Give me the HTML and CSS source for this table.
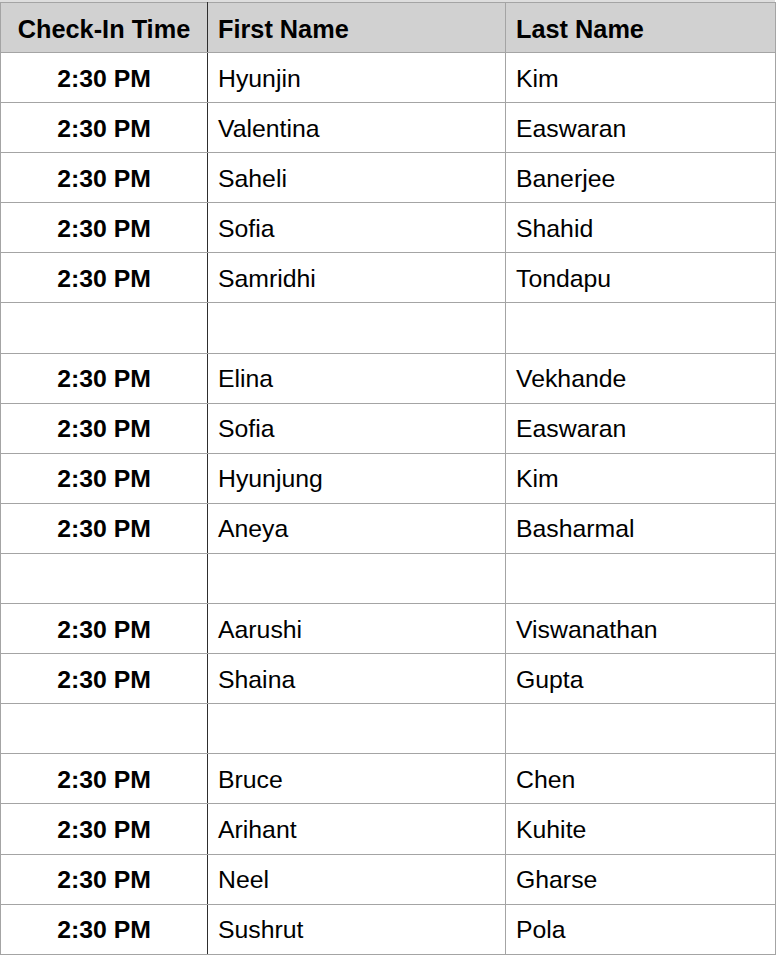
FILE: index.html
```html
<!DOCTYPE html>
<html>
<head>
<meta charset="utf-8">
<link rel="stylesheet" href="styles.css">
</head>
<body>
<div class="sheet">
<table class="roster">
  <colgroup>
    <col class="c-time"><col class="c-first"><col class="c-last">
  </colgroup>
  <thead>
    <tr><th class="time">Check-In Time</th><th>First Name</th><th>Last Name</th></tr>
  </thead>
  <tbody>
    <tr><td class="time">2:30 PM</td><td>Hyunjin</td><td>Kim</td></tr>
    <tr><td class="time">2:30 PM</td><td>Valentina</td><td>Easwaran</td></tr>
    <tr><td class="time">2:30 PM</td><td>Saheli</td><td>Banerjee</td></tr>
    <tr><td class="time">2:30 PM</td><td>Sofia</td><td>Shahid</td></tr>
    <tr><td class="time">2:30 PM</td><td>Samridhi</td><td>Tondapu</td></tr>
    <tr><td class="time"></td><td></td><td></td></tr>
    <tr><td class="time">2:30 PM</td><td>Elina</td><td>Vekhande</td></tr>
    <tr><td class="time">2:30 PM</td><td>Sofia</td><td>Easwaran</td></tr>
    <tr><td class="time">2:30 PM</td><td>Hyunjung</td><td>Kim</td></tr>
    <tr><td class="time">2:30 PM</td><td>Aneya</td><td>Basharmal</td></tr>
    <tr><td class="time"></td><td></td><td></td></tr>
    <tr><td class="time">2:30 PM</td><td>Aarushi</td><td>Viswanathan</td></tr>
    <tr><td class="time">2:30 PM</td><td>Shaina</td><td>Gupta</td></tr>
    <tr><td class="time"></td><td></td><td></td></tr>
    <tr><td class="time">2:30 PM</td><td>Bruce</td><td>Chen</td></tr>
    <tr><td class="time">2:30 PM</td><td>Arihant</td><td>Kuhite</td></tr>
    <tr><td class="time">2:30 PM</td><td>Neel</td><td>Gharse</td></tr>
    <tr><td class="time">2:30 PM</td><td>Sushrut</td><td>Pola</td></tr>
  </tbody>
</table>
</div>
</body>
</html>
```
FILE: styles.css
```css
html, body {
  margin: 0;
  padding: 0;
  background: #ffffff;
}
.sheet {
  width: 775px;
  padding-top: 2px;
  background: linear-gradient(#dedede, #dedede) 0 0 / 100% 2px no-repeat;
}
.roster {
  width: 775px;
  border-collapse: collapse;
  table-layout: fixed;
  font-family: "Liberation Sans", Arial, Helvetica, sans-serif;
  font-size: 24.8px;
  color: #000;
}
.c-time { width: 207px; }
.c-first { width: 298px; }
.c-last { width: 270px; }
.roster th,
.roster td {
  border: 1px solid #a4a4a4;
  padding: 0 0 0 10px;
  text-align: left;
  vertical-align: middle;
  white-space: nowrap;
  line-height: 28px;
}
.roster th {
  height: 47px;
  background: #d1d1d1;
  font-weight: bold;
  font-size: 25.3px;
  padding-top: 2px;
}
.roster td {
  height: 47.1px;
  padding-top: 2px;
}
.roster .time {
  text-align: center;
  padding-left: 0;
  font-weight: bold;
  border-right: 1px solid #2e2e2e;
}
```
